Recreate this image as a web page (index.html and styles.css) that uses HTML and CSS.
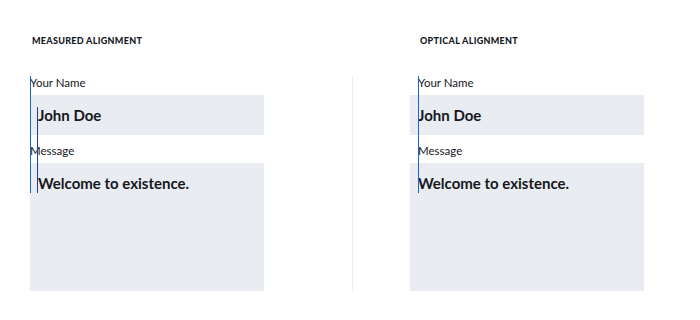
FILE: index.html
```html
<!DOCTYPE html>
<html>
  <head>
    <meta charset="utf-8" />
    <title>Measured vs Optical Alignment</title>
    <link rel="stylesheet" href="styles.css">
  </head>
  <body>
    <div class="page">
      <div class="panel measured">
        <h3>Measured Alignment</h3>
        <form class="demo">
          <label for="name1">Your Name</label>
          <div class="field" id="name1">John Doe</div>
          <label for="msg1">Message</label>
          <div class="field area" id="msg1">Welcome to existence.</div>
          <span class="guide edge"></span>
          <span class="guide inner"></span>
        </form>
      </div>
      <div class="divider"></div>
      <div class="panel optical">
        <h3>Optical Alignment</h3>
        <form class="demo">
          <label for="name2">Your Name</label>
          <div class="field" id="name2">John Doe</div>
          <label for="msg2">Message</label>
          <div class="field area" id="msg2">Welcome to existence.</div>
          <span class="guide edge"></span>
        </form>
      </div>
    </div>
  </body>
</html>
```

FILE: styles.css
```css
body {
  margin: 0;
  font-family: Lato, "Liberation Sans", sans-serif;
  color: #16181d;
  background: white;
}
.page {
  display: flex;
  align-items: flex-start;
  padding: 30px 30px 0;
}
.panel {
  width: 234px;
}
.optical {
  width: 226px;
}
h3 {
  margin: 0 0 0 2px;
  font-size: 9px;
  font-weight: 900;
  letter-spacing: 0.3px;
  text-transform: uppercase;
  line-height: 22px;
  height: 22px;
}
.demo {
  position: relative;
  margin-top: 23px;
}
label {
  display: block;
  font-size: 11.5px;
  line-height: 16px;
  margin-bottom: 4px;
}
.field {
  background-color: #e9ecf1;
  font-size: 15px;
  font-weight: 700;
  line-height: 20px;
  padding: 10px 8px;
  height: 20px;
}
.field + label {
  margin-top: 8px;
}
.area {
  height: 108px;
}
.optical .field {
  margin-left: -8px;
}
.divider {
  width: 1px;
  height: 215px;
  margin: 46px 65px 0 88px;
  background-color: #eceef2;
}
.guide {
  position: absolute;
  width: 1px;
  background-color: #1565d8;
}
.guide.edge {
  left: 0;
  top: 1px;
  height: 117px;
}
.guide.inner {
  left: 7px;
  top: 32px;
  height: 86px;
  background-color: #1f3f9e;
}
```
